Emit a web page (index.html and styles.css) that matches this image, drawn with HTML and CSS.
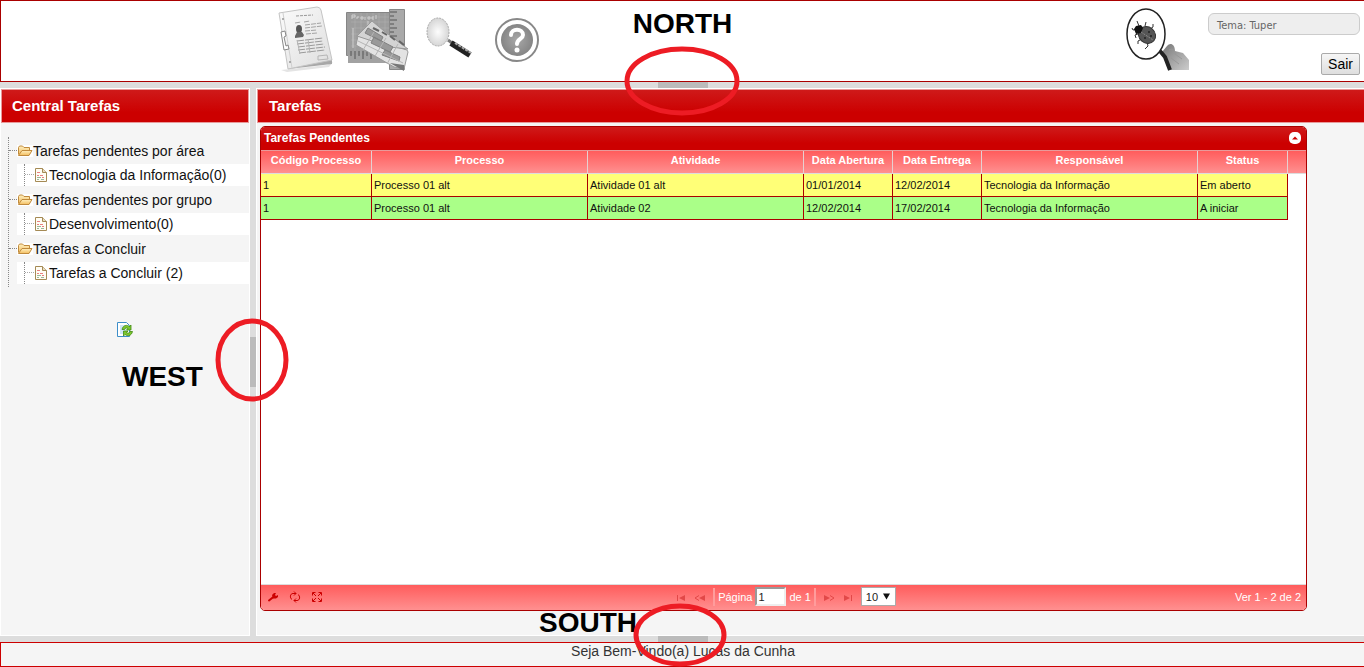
FILE: index.html
```html
<!DOCTYPE html>
<html lang="pt-BR">
<head>
<meta charset="utf-8">
<title>Central Tarefas</title>
<link rel="stylesheet" href="styles.css">
</head>
<body>
<svg class="defs" width="0" height="0" aria-hidden="true">
  <defs>
    <linearGradient id="gold" x1="0" y1="0" x2="0" y2="1"><stop offset="0" stop-color="#fff0c0"/><stop offset="1" stop-color="#f3bd5e"/></linearGradient>
    <linearGradient id="paper" x1="0" y1="0" x2="1" y2="1"><stop offset="0" stop-color="#fbfbfb"/><stop offset="1" stop-color="#dedede"/></linearGradient>
    <radialGradient id="lens"><stop offset="0" stop-color="#fdfdfd"/><stop offset="1" stop-color="#d6d6d6"/></radialGradient>
    <radialGradient id="disc"><stop offset="0" stop-color="#a8a8a8"/><stop offset="1" stop-color="#858585"/></radialGradient>
    <linearGradient id="skin" x1="0" y1="0" x2="1" y2="1"><stop offset="0" stop-color="#777"/><stop offset="1" stop-color="#ccc"/></linearGradient>
    <symbol id="folder" viewBox="0 0 16 12">
      <path fill="#fff" d="M0 0h16v12H0z"/>
      <path fill="url(#gold)" stroke="#c08a3c" d="M1.500 9.500v-7l1-1.500h3l1.500 1.500h5.500v3"/>
      <path fill="url(#gold)" stroke="#c08a3c" stroke-linejoin="round" d="M1.500 10.500l3.500-5h10l-3 5z"/>
    </symbol>
    <symbol id="sheet" viewBox="0 0 12 14">
      <path fill="#fffdf4" stroke="#a58a55" d="M.5.5h7l4 4v9H.5z"/>
      <path fill="#e8dcc0" stroke="#a58a55" d="M7.500.5v4h4"/>
      <path stroke="#e88080" d="M2 4.500h3M2 7.500h2M5 7.500h3M7 9.500h2"/>
      <path stroke="#9ab89a" d="M2 9.500h4M2 11.500h2M6 11.500h3"/>
    </symbol>
  </defs>
</svg>

<div class="page">
  <header class="north">
    <nav class="tools">
      <button class="tool" type="button" aria-label="Cadastros">
        <svg viewBox="0 0 64 64">
          <path fill="#e4e4e4" d="M6 62l46-5 6-3-4 5-42 5z"/>
          <path fill="#a8a8a8" d="M13 61l44-5v-5l-44 6z"/>
          <path fill="url(#paper)" stroke="#c4c4c4" d="M4 5L42-1q3 0 4 3l11 50-44 9z"/>
          <path fill="none" stroke="#d0d0d0" d="M8 5l9 55"/>
          <path fill="#fff" stroke="#888" d="M6 24l4-1 1 5-2 1 2 9 2-1 1 4-5 1z"/>
          <path fill="none" stroke="#999" d="M21 8l17-1" stroke-dasharray="3 1"/>
          <ellipse cx="24" cy="21" rx="3" ry="4" fill="#555"/>
          <path fill="#666" d="M20 28l2-4h5l2 3-1 2-8 1z"/>
          <path fill="none" stroke="#a4a4a4" d="M20 15l6-1M29 14l6-1M30 17l16-2M30 20l17-2M30 23l12-1M31 26l11-1" stroke-dasharray="5 1"/>
          <path fill="none" stroke="#9a9a9a" d="M22 33l26-3M22 36l26-3M23 39l26-3M23 42l27-3M24 45l26-3" stroke-dasharray="7 1 9 1"/>
          <path fill="none" stroke="#b5b5b5" d="M22 32l3 14M33 31l2 14M43 48l9-1 1 4-10 1z"/>
          <circle cx="8" cy="11" r="1" fill="#999"/><circle cx="15" cy="54" r="1" fill="#999"/>
        </svg>
      </button>
      <button class="tool" type="button" aria-label="Projetos">
        <svg viewBox="0 0 64 64">
          <path fill="#9d9d9d" stroke="#858585" d="M1.500 4.500h44v43h-44z"/>
          <path fill="none" stroke="#b8b8b8" d="M6 9h38M6 14h38M6 20h38M6 26h38M6 32h38M6 38h38M10 5v42M16 5v42M22 5v42M28 5v42M34 5v42M40 5v42" opacity=".4"/>
          <path fill="none" stroke="#cfcfcf" d="M7 7v4M7 7h3v2H7M12 11V9h2M16 9h2v2h-2zM20 9v3M23 9h2v2h-2zM29 9h-2v2h2M31 7v4M8 20v20M23 13v28"/>
          <path fill="#a9a9a9" stroke="#888" d="M44.500 1.500h15v60h-15z"/>
          <path fill="#a2a2a2" stroke="#858585" d="M3.500 47.500h56v7h-56z"/>
          <path fill="#a2a2a2" d="M3 47h40v8H3z"/>
          <path fill="none" stroke="#555" d="M45 4h7M45 8h4M45 12h7M45 16h4M45 20h7M45 24h4M45 28h7M6 43v5M10 43v8M14 43v5M18 43v8M22 43v5M26 43v8"/>
          <path fill="#e3e3e3" stroke="#999" d="M13 28L62 42l1 2-4 17-10-2L11 37z"/>
          <path fill="#d4d4d4" stroke="#999" d="M27 13l12 10 24 18-18-2-33-11z"/>
          <path fill="#999" stroke="#808080" d="M23 20l15 9-2 4-16-8zM29 29l19 10-3 5-19-9zM40 42l15 7-1 4-17-6z"/>
          <path fill="none" stroke="#b5b5b5" d="M13 33l45 22M29 24L18 42M41 30L30 48M53 36L42 56"/>
          <path fill="none" stroke="#666" d="M28 20l6 3M37 24l5 3M45 28l5 4M54 33l5 4" stroke-width="2"/>
          <path fill="#777" d="M45 55l14 2v6z"/>
        </svg>
      </button>
      <button class="tool" type="button" aria-label="Pesquisar">
        <svg viewBox="0 0 64 64">
          <ellipse cx="23" cy="24" rx="11" ry="14" fill="url(#lens)" stroke="#aaa" stroke-dasharray="2 1"/>
          <path stroke="#777" stroke-width="3" d="M33 32l4 3"/>
          <path stroke="#222" stroke-width="6" d="M36 35l19 12"/>
          <path stroke="#aaa" stroke-width="2" d="M40 35l16 10" stroke-dasharray="3 1"/>
        </svg>
      </button>
      <button class="tool" type="button" aria-label="Ajuda">
        <svg viewBox="0 0 64 64">
          <circle cx="32" cy="32" r="21" fill="#fff" stroke="#888" stroke-width="2"/>
          <circle cx="32" cy="32" r="16" fill="url(#disc)"/>
          <path fill="none" stroke="#fff" stroke-width="4" stroke-linecap="round" stroke-linejoin="round" d="M26 27c0-7 12-7 12 0 0 4-6 4-6 9"/>
          <circle cx="32" cy="42" r="2.500" fill="#fff"/>
        </svg>
      </button>
    </nav>
    <button class="tool bug" type="button" aria-label="Reportar erro">
      <svg viewBox="0 0 64 64">
        <path fill="url(#skin)" d="M36 44l5-6c3-4 8-2 8 5l8 2 6 7v10H43z"/>
        <path fill="none" stroke="#999" d="M43 42c4-2 6 0 6 4l7 5M45 50l8 6"/>
        <path fill="none" stroke="#222" stroke-width="4" d="M34 43l5 6 5 13"/>
        <ellipse cx="20" cy="26" rx="19" ry="25" fill="#fff" stroke="#222" stroke-width="1.500"/>
        <path fill="none" stroke="#333" d="M12 21l-5 1-1-2M12 26l-3 1 1 3M16 31l-4 2v3M21 34l1 4-3 3M13 18l-2-5M19 18l1-4M24 21l3-2v-3M29 28l-1-1"/>
        <ellipse cx="21" cy="27" rx="9" ry="8" fill="#555" stroke="#333" transform="rotate(40 21 27)"/>
        <path fill="#111" d="M8 21l2-3 5-1 2 3-2 5-5 1z"/>
        <path fill="none" stroke="#888" d="M15 24l12 8" stroke-dasharray="2 1"/>
        <circle cx="23" cy="24" r="1" fill="#222"/><circle cx="19" cy="30" r="1" fill="#222"/><circle cx="25" cy="28" r="1" fill="#222"/>
      </svg>
    </button>
    <div class="session">
      <button class="theme" type="button">Tema: Tuper</button>
      <button class="exit" type="button">Sair</button>
    </div>
    <strong class="note note-north">NORTH</strong>
  </header>

  <div class="split split-h">
    <span class="grip"></span>
    <svg class="ring ring-north" viewBox="0 0 116 70"><ellipse cx="58" cy="35" rx="55" ry="32"/></svg>
  </div>

  <div class="middle">
    <aside class="west">
      <h2 class="pane-title">Central Tarefas</h2>
      <ul class="tree">
        <li>
          <div class="branch"><svg class="folder"><use href="#folder"/></svg>Tarefas pendentes por área</div>
          <a class="leaf" href="#"><svg class="sheet"><use href="#sheet"/></svg>Tecnologia da Informação(0)</a>
        </li>
        <li>
          <div class="branch"><svg class="folder"><use href="#folder"/></svg>Tarefas pendentes por grupo</div>
          <a class="leaf" href="#"><svg class="sheet"><use href="#sheet"/></svg>Desenvolvimento(0)</a>
        </li>
        <li>
          <div class="branch"><svg class="folder"><use href="#folder"/></svg>Tarefas a Concluir</div>
          <a class="leaf" href="#"><svg class="sheet"><use href="#sheet"/></svg>Tarefas a Concluir (2)</a>
        </li>
      </ul>
      <button class="refresh" type="button" aria-label="Atualizar">
        <svg viewBox="0 0 16 16">
          <path fill="#fff" stroke="#3d8ec9" d="M.5.5h9l3 3v11H.5z"/>
          <path fill="#cfe6f6" d="M3 3h6v9H3z"/>
          <path fill="#7cc62e" stroke="#3f8a12" stroke-width=".8" stroke-linejoin="round" d="M5 7.500C6 3 10 2.500 12.500 4.500L14 3v5H9.500l1.500-1.500C9.500 5.500 8 6 7.500 7.500z"/>
          <path fill="#7cc62e" stroke="#3f8a12" stroke-width=".8" stroke-linejoin="round" d="M15.500 9.500c-1 4.500-5 5-7.500 3L6.500 14V9H11l-1.500 1.500c1.500 1 3 .5 3.500-1z"/>
        </svg>
      </button>
      <strong class="note note-west">WEST</strong>
    </aside>

    <div class="split split-v">
      <span class="grip"></span>
      <svg class="ring ring-west" viewBox="0 0 74 84"><ellipse cx="37" cy="42" rx="34" ry="39"/></svg>
    </div>

    <main class="center">
      <h2 class="pane-title">Tarefas</h2>
      <section class="grid">
        <div class="caption">
          <h3>Tarefas Pendentes</h3>
          <button class="collapse" type="button" aria-label="Recolher">
            <svg viewBox="0 0 12 12"><rect width="12" height="12" rx="5" fill="#fff"/><path fill="#c00" d="M3 7.500L6 4.500l3 3z"/></svg>
          </button>
        </div>
        <div class="rows">
          <table>
            <colgroup><col class="c-code"><col class="c-wide"><col class="c-wide"><col class="c-date"><col class="c-date"><col class="c-wide"><col class="c-status"></colgroup>
            <thead>
              <tr><th>Código Processo</th><th>Processo</th><th>Atividade</th><th>Data Abertura</th><th>Data Entrega</th><th>Responsável</th><th>Status</th></tr>
            </thead>
            <tbody>
              <tr class="open"><td>1</td><td>Processo 01 alt</td><td>Atividade 01 alt</td><td>01/01/2014</td><td>12/02/2014</td><td>Tecnologia da Informação</td><td>Em aberto</td></tr>
              <tr class="todo"><td>1</td><td>Processo 01 alt</td><td>Atividade 02</td><td>12/02/2014</td><td>17/02/2014</td><td>Tecnologia da Informação</td><td>A iniciar</td></tr>
            </tbody>
          </table>
          <div class="gutter"></div>
        </div>
        <div class="pager">
          <div class="pager-left">
            <button type="button" aria-label="Configurar"><svg viewBox="0 0 12 12"><path stroke="#c00" stroke-width="2" stroke-linecap="round" d="M2 9.500l5-4"/><path fill="#c00" d="M5 4l2-2h2L8 4l1 1 2-1v2L9 7.500H6z"/></svg></button>
            <button type="button" aria-label="Recarregar"><svg viewBox="0 0 12 12"><path fill="none" stroke="#c00" d="M3 8.500C.5 7 1 2.500 4 2.500h3M5 .5l2 2-2 2M9 3.500c2.500 1.500 2 6-1 6H5M7 7.500l-2 2 2 2"/></svg></button>
            <button type="button" aria-label="Expandir"><svg viewBox="0 0 12 12"><path fill="none" stroke="#c00" d="M1.500 4.500v-3h3M7.500 1.500h3v3M10.500 7.500v3h-3M4.500 10.500h-3v-3M2 2l3 3M10 2L7 5M2 10l3-3M10 10L7 7"/></svg></button>
          </div>
          <div class="pager-mid">
            <button type="button" aria-label="Primeira"><svg class="arrow" viewBox="0 0 12 6"><path fill="#e24848" d="M2 0h1v6H2zM10 0v6L4 3z"/></svg></button>
            <button type="button" aria-label="Anterior"><svg class="arrow" viewBox="0 0 12 6"><path fill="none" stroke="#e24848" d="M5 .5L1 3l4 2.500"/><path fill="#e24848" d="M11 0v6L5 3z"/></svg></button>
            <span class="bar"></span>
            <label class="page-no">Página <input type="text" value="1"> de 1</label>
            <span class="bar"></span>
            <button type="button" aria-label="Próxima"><svg class="arrow" viewBox="0 0 12 6"><path fill="none" stroke="#e24848" d="M7 .5L11 3 7 5.500"/><path fill="#e24848" d="M1 0v6l6-3z"/></svg></button>
            <button type="button" aria-label="Última"><svg class="arrow" viewBox="0 0 12 6"><path fill="#e24848" d="M9 0h1v6H9zM2 0v6l6-3z"/></svg></button>
            <span class="size">
              <select aria-label="Registros por página"><option>10</option><option>20</option></select>
              <svg class="drop" viewBox="0 0 8 7"><path d="M0 0h8L4 7z"/></svg>
            </span>
          </div>
          <div class="pager-right">Ver 1 - 2 de 2</div>
        </div>
      </section>
      <strong class="note note-south">SOUTH</strong>
    </main>
  </div>

  <div class="split split-h">
    <span class="grip"></span>
    <svg class="ring ring-south" viewBox="0 0 94 66"><ellipse cx="47" cy="33" rx="44" ry="29"/></svg>
  </div>

  <footer class="south">Seja Bem-Vindo(a) Lucas da Cunha</footer>
</div>
</body>
</html>
```

FILE: styles.css
```css
* { box-sizing: border-box; }

body {
  margin: 0;
  font-family: "Liberation Sans", Arial, sans-serif;
  font-size: 14px;
  color: #222;
}

button { padding: 0; border: 0; background: none; font: inherit; color: inherit; }
svg { display: block; }
.defs { position: absolute; }

.page {
  display: flex;
  flex-direction: column;
  height: 100vh;
  overflow: hidden;
  background: #f5f5f5;
}

/* North pane */
.north {
  position: relative;
  display: flex;
  align-items: flex-start;
  padding: 7px 4px 6px 274px;
  border: 1px solid #a00;
  border-right: 0;
  background: #fff;
}
.tools { display: flex; gap: 6px; }
.tool { width: 64px; height: 64px; }
.tool svg { width: 64px; height: 64px; overflow: visible; }
.bug { margin-left: auto; }
.session {
  display: flex;
  flex-direction: column;
  align-items: flex-end;
  gap: 18px;
  padding-top: 5px;
  margin-left: 18px;
}
.theme {
  width: 152px;
  height: 22px;
  padding: 2px 0 0 8px;
  border: 1px solid #ccc;
  border-radius: 6px;
  background: #eee;
  color: #666;
  font-family: "DejaVu Sans Condensed", "DejaVu Sans", sans-serif;
  font-size: 11px;
  text-align: left;
}
.exit {
  height: 22px;
  padding: 0 6px;
  border: 1px solid #aaa;
  border-radius: 2px;
  background: linear-gradient(#f6f6f6, #dedede);
  color: #000;
}

/* Resizers */
.split { position: relative; display: flex; align-items: center; justify-content: center; flex: none; background: #ddd; }
.split-h { height: 6px; padding-left: 1px; }
.split-v { width: 6px; }
.grip { background: #bbb; }
.split-h .grip { width: 50px; height: 6px; }
.split-v .grip { width: 6px; height: 50px; }

/* Annotations */
.ring {
  position: absolute;
  z-index: 2;
  top: 50%;
  left: 50%;
  transform: translate(-50%, -50%);
  fill: none;
  stroke: #ed1c24;
  stroke-width: 5px;
  pointer-events: none;
}
.ring-north { width: 116px; height: 70px; margin-top: -4px; }
.ring-west { width: 74px; height: 84px; margin: -2px 0 0 -1px; }
.ring-south { width: 94px; height: 66px; margin: -4px 0 0 -2px; }
.note { color: #000; font-size: 28px; line-height: 32px; }
.note-north { position: absolute; top: 7px; left: 50%; transform: translateX(-50%); }
.note-west { display: block; margin: 23px 0 0 121px; }
.note-south { position: absolute; bottom: -4px; left: 282px; }

/* West pane */
.middle { display: flex; flex: 1; min-height: 0; }
.west { width: 250px; flex: none; border: 1px solid #fff; background: #f5f5f5; }
.pane-title {
  margin: 0;
  padding: 0 10px;
  border: 1px solid #e89a9a;
  background: linear-gradient(#cf1a1a, #c00 70%);
  color: #fff;
  font-size: 15px;
  line-height: 32px;
}
.tree {
  margin: 14px 0 0 7px;
  padding: 0 0 3px;
  border-left: 1px dotted #888;
  list-style: none;
}
.tree li { padding-left: 8px; }
.branch { position: relative; display: flex; align-items: center; height: 27px; }
.branch::before {
  content: "";
  position: absolute;
  left: -8px;
  width: 8px;
  border-top: 1px dotted #888;
}
.folder { width: 16px; height: 12px; }
.leaf {
  display: flex;
  align-items: center;
  height: 22px;
  padding-left: 7px;
  background: #fff;
  color: inherit;
  text-decoration: none;
}
.leaf::before { content: ""; width: 10px; height: 22px; border-left: 1px dotted #888; background: linear-gradient(90deg, #aaa 50%, #fff 50%) 0 10px / 2px 1px repeat-x; }
.sheet { width: 12px; height: 14px; margin-right: 2px; }
.branch, .leaf { color: #111; }
.refresh { display: block; margin: 35px 0 0 116px; }
.refresh svg { width: 16px; height: 16px; }

/* Center pane */
.center {
  position: relative;
  display: flex;
  flex-direction: column;
  flex: 1;
  min-width: 0;
  border: 1px solid #fff;
  border-right: 0;
  background: #f5f5f5;
}
.center .pane-title { padding-left: 11px; border-right: 0; }
.grid {
  display: flex;
  flex-direction: column;
  flex: 1;
  min-height: 0;
  margin: 3px 57px 24px 3px;
  border: 1px solid #a00;
  border-radius: 5px;
  overflow: hidden;
  background: #fff;
  font-size: 11px;
}
.caption {
  display: flex;
  align-items: center;
  justify-content: space-between;
  height: 24px;
  padding: 0 5px 1px 3px;
  border-bottom: 1px solid #e89a9a;
  background: linear-gradient(#cf1a1a, #c00 70%);
  color: #fff;
}
.caption h3 { margin: 0; font-size: 12px; }
.collapse svg { width: 12px; height: 12px; }
.rows { display: flex; align-items: flex-start; flex: 1; }
.gutter { width: 18px; height: 23px; border-bottom: 1px solid #ddd; background: linear-gradient(#ff5c5c, #ff9090); }
table { flex: 1; width: 0; table-layout: fixed; border-collapse: separate; border-spacing: 0; }
.c-code { width: 111px; }
.c-wide { width: 216px; }
.c-date { width: 89px; }
.c-status { width: 90px; }
th, td { height: 23px; padding: 0 2px; white-space: nowrap; overflow: hidden; }
th {
  padding-bottom: 4px;
  border-right: 1px solid #e6d0d0;
  border-bottom: 1px solid #ddd;
  background: linear-gradient(#ff5c5c, #ff9090);
  color: #fff;
}
td { border-right: 1px solid #a00; border-bottom: 1px solid #a00; color: #111; }
.open { background: #ffff77; }
.todo { background: #aaff88; }

.pager {
  display: grid;
  grid-template-columns: 1fr auto 1fr;
  align-items: center;
  height: 26px;
  padding-bottom: 2px;
  border-top: 1px solid #ddd;
  background: linear-gradient(#ff5c5c, #ff9090);
  color: #fff;
}
.pager-left { display: flex; gap: 10px; padding-left: 6px; }
.pager-left svg { width: 12px; height: 12px; }
.pager-mid { display: flex; align-items: center; gap: 7px; margin-left: 4px; }
.arrow { width: 12px; height: 6px; margin-top: 2px; }
.pager-right { padding-right: 5px; text-align: right; }
.bar { width: 2px; height: 18px; background: #ff9c9c; }
.page-no { display: flex; align-items: center; gap: 3px; margin: 0 -4px; }
.page-no input {
  width: 31px;
  height: 19px;
  padding: 0 1px;
  border: 2px solid #eee;
  border-top-color: #999;
  border-left-color: #999;
  background: #fff;
  color: #222;
  font: inherit;
}
.size { position: relative; }
.size select {
  display: block;
  width: 35px;
  height: 19px;
  padding: 0 4px;
  border: 1px solid #aaa;
  border-radius: 0;
  background: #fff;
  appearance: none;
  color: #222;
  font: inherit;
}
.drop { position: absolute; top: 6px; right: 6px; width: 7px; height: 7px; fill: #111; pointer-events: none; }

/* South pane */
.south {
  height: 25px;
  padding-left: 1px;
  border: 1px solid #c00;
  border-right: 0;
  color: #333;
  line-height: 17px;
  text-align: center;
}
```
